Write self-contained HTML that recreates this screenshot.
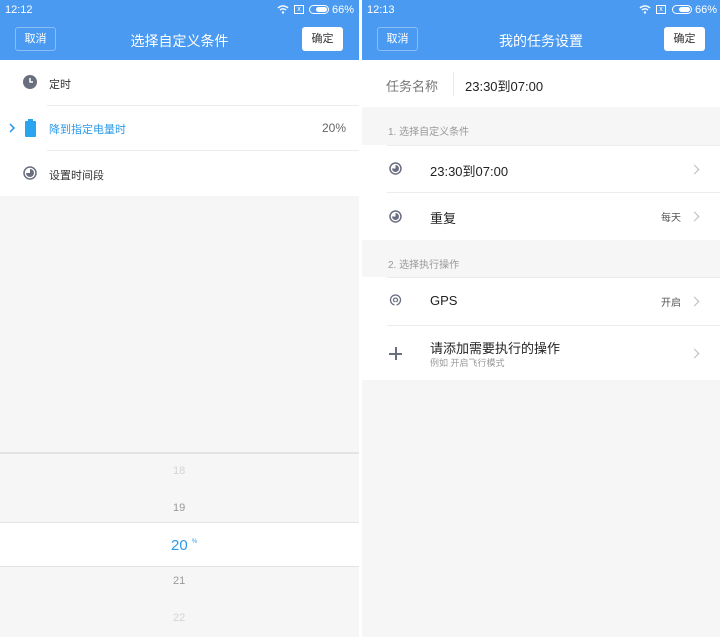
<!DOCTYPE html>
<html><head><meta charset="utf-8"><style>
*{margin:0;padding:0;box-sizing:border-box}
body{width:720px;height:637px;overflow:hidden;background:#fff;font-family:"Liberation Sans","Noto Sans CJK SC",sans-serif;position:relative}
.p{position:absolute;top:0;height:637px;background:#f6f6f6;overflow:hidden}
.hd{position:absolute;left:0;right:0;top:0;height:60px;background:#4b9af1;color:#fff}
.sb{position:absolute;top:3px;font-size:11px;color:#fff}
.title{position:absolute;top:30px;left:0;right:0;text-align:center;font-size:15px}
.bl{position:absolute;top:27px;width:41px;height:24px;border:1px solid rgba(255,255,255,.35);border-radius:3px;font-size:11px;text-align:center;line-height:22px}
.br{position:absolute;top:27px;width:41px;height:24px;background:#fff;color:#333;border-radius:3px;font-size:11px;text-align:center;line-height:24px}
.row{position:absolute;left:0;right:0;background:#fff}
.ln{position:absolute;height:1px;background:#ececec;right:0}
.t{position:absolute;font-size:11px;color:#333}
.chev{position:absolute;right:22px;width:7px;height:7px;border-top:1px solid #bbb;border-right:1px solid #bbb;transform:rotate(45deg)}
.bat{position:absolute;top:5px;width:20px;height:9px;border:1px solid #fff;border-radius:5px}
.bat i{position:absolute;left:6px;top:1px;right:1px;bottom:1px;background:#fff;border-radius:3px}
</style></head><body>
<div class="p" style="left:0;width:359px">
<div class="hd">
<div class="sb" style="left:5px;top:4px">12:12</div>
<svg style="position:absolute;left:277px;top:4px" width="12" height="10"><path d="M1 4a7 7 0 0 1 10 0M3 6a4.5 4.5 0 0 1 6 0" stroke="#fff" stroke-width="1.4" fill="none"/><circle cx="6" cy="8.5" r="1.2" fill="#fff"/></svg>
<div style="position:absolute;left:294px;top:5px;width:10px;height:9px;border:1px solid #fff;font-size:7px;line-height:7px;text-align:center">x</div>
<div class="bat" style="left:309px"><i></i></div>
<div class="sb" style="left:332px;top:4px">66%</div>
<div class="bl" style="left:15px">取消</div>
<div class="title" style="top:31px;font-size:14px">选择自定义条件</div>
<div class="br" style="left:302px">确定</div>
</div>
<div class="row" style="top:60px;height:136px"></div>
<svg style="position:absolute;left:23px;top:75px" width="14" height="14"><circle cx="7" cy="7" r="7" fill="#6a6f80"/><path d="M7 3v4h3" stroke="#fff" stroke-width="1.5" fill="none"/></svg>
<div class="t" style="left:49px;top:76px">定时</div>
<div class="ln" style="left:47px;top:105px"></div>
<svg style="position:absolute;left:9px;top:123px" width="8" height="10"><path d="M1 1l4 4-4 4" stroke="#2196e8" stroke-width="1.5" fill="none"/></svg>
<div style="position:absolute;left:25px;top:121px;width:11px;height:16px;background:#2aa4ef;border-radius:1px"></div>
<div style="position:absolute;left:28px;top:119px;width:5px;height:2px;background:#2aa4ef"></div>
<div class="t" style="left:49px;top:121px;color:#2c9ae8">降到指定电量时</div>
<div class="t" style="left:322px;top:121px;color:#666;font-size:12px">20%</div>
<div class="ln" style="left:47px;top:150px"></div>
<svg style="position:absolute;left:23px;top:166px" width="14" height="14"><circle cx="7" cy="7" r="6" fill="#fff" stroke="#6a6f80" stroke-width="1.5"/><path d="M7 3a4 4 0 1 1-4 4h4z" fill="#6a6f80"/></svg>
<div class="t" style="left:49px;top:167px">设置时间段</div>
<div style="position:absolute;left:0;right:0;top:452px;height:2px;background:#e4e4e4"></div>
<div class="t" style="left:173px;top:465px;color:#d4d4d4">18</div>
<div class="t" style="left:173px;top:502px;color:#999">19</div>
<div class="row" style="top:522px;height:45px;border-top:1px solid #e4e4e4;border-bottom:1px solid #e4e4e4"></div>
<div class="t" style="left:171px;top:537px;color:#2c9ae8;font-size:15px">20</div>
<div class="t" style="left:192px;top:539px;color:#2c9ae8;font-size:6px">%</div>
<div class="t" style="left:173px;top:575px;color:#999">21</div>
<div class="t" style="left:173px;top:612px;color:#d4d4d4">22</div>
</div>
<div class="p" style="left:362px;width:358px">
<div class="hd">
<div class="sb" style="left:5px;top:4px">12:13</div>
<svg style="position:absolute;left:277px;top:4px" width="12" height="10"><path d="M1 4a7 7 0 0 1 10 0M3 6a4.5 4.5 0 0 1 6 0" stroke="#fff" stroke-width="1.4" fill="none"/><circle cx="6" cy="8.5" r="1.2" fill="#fff"/></svg>
<div style="position:absolute;left:294px;top:5px;width:10px;height:9px;border:1px solid #fff;font-size:7px;line-height:7px;text-align:center">x</div>
<div class="bat" style="left:310px"><i></i></div>
<div class="sb" style="left:333px;top:4px">66%</div>
<div class="bl" style="left:15px">取消</div>
<div class="title" style="top:31px;font-size:14px">我的任务设置</div>
<div class="br" style="left:302px">确定</div>
</div>
<div class="row" style="top:60px;height:47px"></div>
<div class="t" style="left:24px;top:76px;font-size:13px;color:#777">任务名称</div>
<div style="position:absolute;left:91px;top:72px;width:1px;height:24px;background:#e8e8e8"></div>
<div class="t" style="left:103px;top:76px;font-size:13px;color:#222">23:30到07:00</div>
<div class="t" style="left:26px;top:123px;font-size:10px;color:#999">1. 选择自定义条件</div>
<div class="row" style="top:145px;height:95px"></div>
<div class="ln" style="left:25px;top:145px"></div>
<svg style="position:absolute;left:27px;top:162px" width="13" height="13"><circle cx="6.5" cy="6.5" r="5.5" fill="#fff" stroke="#6a6f80" stroke-width="1.5"/><path d="M6.5 3a3.5 3.5 0 1 1-3.5 3.5h3.5z" fill="#6a6f80"/></svg>
<div class="t" style="left:68px;top:161px;font-size:13px;color:#222">23:30到07:00</div>
<div class="chev" style="top:166px"></div>
<div class="ln" style="left:25px;top:192px"></div>
<svg style="position:absolute;left:27px;top:210px" width="13" height="13"><circle cx="6.5" cy="6.5" r="5.5" fill="#fff" stroke="#6a6f80" stroke-width="1.5"/><path d="M6.5 3a3.5 3.5 0 1 1-3.5 3.5h3.5z" fill="#6a6f80"/></svg>
<div class="t" style="left:68px;top:208px;font-size:13px;color:#222">重复</div>
<div class="t" style="left:299px;top:209px;font-size:10px;color:#555">每天</div>
<div class="chev" style="top:213px"></div>
<div class="t" style="left:26px;top:256px;font-size:10px;color:#999">2. 选择执行操作</div>
<div class="row" style="top:277px;height:103px"></div>
<div class="ln" style="left:25px;top:277px"></div>
<svg style="position:absolute;left:27px;top:294px" width="13" height="14"><circle cx="6.5" cy="6" r="5" fill="none" stroke="#6a6f80" stroke-width="1.3"/><circle cx="6.5" cy="6" r="2" fill="none" stroke="#6a6f80" stroke-width="1.3"/><path d="M6.5 8v5" stroke="#fff" stroke-width="2"/></svg>
<div class="t" style="left:68px;top:293px;font-size:13px;color:#222">GPS</div>
<div class="t" style="left:299px;top:294px;font-size:10px;color:#555">开启</div>
<div class="chev" style="top:298px"></div>
<div class="ln" style="left:25px;top:325px"></div>
<div style="position:absolute;left:27px;top:353px;width:13px;height:1.5px;background:#6a6f80"></div>
<div style="position:absolute;left:33px;top:347px;width:1.5px;height:13px;background:#6a6f80"></div>
<div class="t" style="left:68px;top:338px;font-size:13px;color:#222">请添加需要执行的操作</div>
<div class="t" style="left:68px;top:356px;font-size:9px;color:#999">例如 开启飞行模式</div>
<div class="chev" style="top:350px"></div>
</div>
</body></html>
